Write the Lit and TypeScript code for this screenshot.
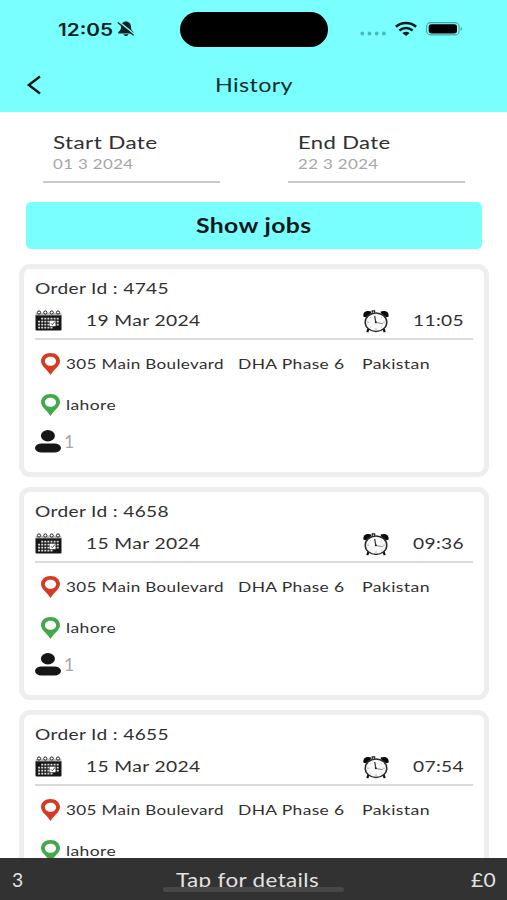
import { LitElement, html, css, svg, nothing } from "lit";
import { customElement, property } from "lit/decorators.js";

/* A line of text drawn to a fixed advance width, on a baseline inside its own line box. */
const line = (text: string, width: number, size: number, height: number, base: number, cls = "") => html`
  <svg class="line ${cls}" width=${width} height=${height} font-size=${size}>
    ${svg`<text x="0" y=${base} textLength=${width} lengthAdjust="spacingAndGlyphs">${text}</text>`}
  </svg>`;

const lineStyles = css`
  svg { display: block; flex: none; overflow: visible; }
  .line { font-family: Lato, "Open Sans", sans-serif; letter-spacing: 0.3px; fill: #303030; }
  .soft { fill: #a6a6a6; }
  .strong { font-weight: 700; fill: #051818; }
  .head { fill: #0c2e2e; }
  .pale { fill: #e2e2e2; }
`;

const calendarIcon = html`<svg width="27" height="21" viewBox="0 0 27 21">
  <path d="M0.5 5h26v14.5a1 1 0 0 1-1 1h-24a1 1 0 0 1-1-1z" fill="#161616"/>
  <path d="M0.7 2.8h25.6v2.6H0.7z" fill="#bbb"/>
  <g fill="#fff" stroke="#222" stroke-width="1"><circle cx="4" cy="2.5" r="1.6"/><circle cx="10.3" cy="2.5" r="1.6"/><circle cx="16.7" cy="2.5" r="1.6"/><circle cx="23" cy="2.5" r="1.6"/></g>
  <g stroke="#d8d8d8" stroke-width="1.8" stroke-dasharray="2 1.1" fill="none">
    <path d="M6.2 8.6h18.4M3.1 11.6h21.5M3.1 14.6h21.5M3.1 17.6h15.3"/></g>
  <path d="M14.6 10.8h5.8v5.4h-5.8z" fill="#fff"/><path d="M16 13.4l1.300 1.300 2.800-3.300" fill="none" stroke="#333" stroke-width="0.9"/>
</svg>`;

const clockIcon = html`<svg width="26" height="23" viewBox="0 0 26 23">
  <path d="M5.500 18.500l-1.200 3.600M20.500 18.500l1.200 3.600" stroke="#111" stroke-width="2.200"/>
  <path d="M0.500 6.800C-.4 2 2.800-.2 8.400 1.400L8 3.200 2.800 7.300zM25.500 6.800c.9-4.800-2.300-7-7.900-5.400l.4 1.800 5.200 4.100z" fill="#080808"/>
  <path d="M9.300 2.800V.9h2.300v1.800" fill="none" stroke="#222" stroke-width="1.300"/>
  <ellipse cx="13" cy="12.200" rx="10.800" ry="9.300" fill="#fafafa" stroke="#2a2a2a" stroke-width="1.500"/>
  <path d="M13 18.200V20M4 12.200h2.200M19.800 12.200h2.200M7.300 7.400l.8.7M18.700 7.400l-.8.7M7.300 17.200l.8-.7M18.700 17.200l-.8-.7" stroke="#999" stroke-width="0.8"/>
  <path d="M11.700 5.800l1.100 6.700" fill="none" stroke="#333" stroke-width="1.200"/><path d="M12.800 12.500l7 1.200" stroke="#777" stroke-width="0.9"/><circle cx="12.800" cy="12.300" r="1" fill="#222"/>
</svg>`;

const pinIcon = (fill: string) => html`<svg width="19" height="22" viewBox="0 0 19 22">
  <path fill-rule="evenodd" fill=${fill} d="M9.500 0C4.100 0 0 3.500 0 8.100c0 4.900 5.300 7.600 9.500 13.900C13.700 15.700 19 13 19 8.100 19 3.500 14.900 0 9.500 0zM9.500 3.700c3.200 0 5.600 1.900 5.600 4.500s-2.400 4.500-5.600 4.500S3.900 10.800 3.900 8.200s2.400-4.500 5.600-4.500z"/>
</svg>`;

const personIcon = html`<svg width="26" height="23" viewBox="0 0 26 23" fill="#161616">
  <ellipse cx="12.900" cy="5.800" rx="7" ry="5.700"/><rect y="13.500" width="26" height="9" rx="6.500" ry="4.500"/>
</svg>`;

@customElement("status-bar")
class StatusBar extends LitElement {
  static styles = [lineStyles, css`
    :host { display: flex; height: 59px; box-sizing: border-box; padding: 12px 44px 0 58px; }
    .clock { font-family: Inter, sans-serif; font-weight: 600; fill: #082020; letter-spacing: 0; }
    .bell { margin: 9px 0 0 4px; }
    .island { width: 148px; height: 35px; border-radius: 18px; background: #000; margin-left: 45px; flex: none; }
    .dots { margin: 19px 0 0 32px; }
    .wifi { margin: 10px 0 0 8px; }
    .battery { margin: 10px 0 0 9px; }
  `];
  render() {
    return html`
      ${line("12:05", 55, 17, 35, 23.5, "clock")}
      <svg class="bell" width="18" height="16" viewBox="0 0 18 16">
        <path d="M9 0.500C6 .500 4 3 4 5.600c0 3-.900 4.400-2.600 5.500-.500.400-.300 1.500.400 1.500h14.400c.700 0 .900-1.100.400-1.500-1.700-1.100-2.600-2.500-2.600-5.500C14 3 12 .500 9 .500zM6.500 13.300h5c-.300 1.100-1.200 1.800-2.500 1.800s-2.200-.7-2.500-1.800z" fill="#0a2222"/>
        <path d="M1.500 0.300L17.400 13.200" stroke="#7ff" stroke-width="1.500"/>
        <path d="M.800 1.400L16.600 14.300" stroke="#0a2222" stroke-width="1.300"/>
      </svg>
      <div class="island"></div>
      <svg class="dots" width="27" height="5" viewBox="0 0 27 5" fill="#50b5b5">
        <circle cx="2.300" cy="2.500" r="1.900"/><circle cx="9.500" cy="2.500" r="1.900"/><circle cx="16.700" cy="2.500" r="1.900"/><circle cx="23.900" cy="2.500" r="1.900"/>
      </svg>
      <svg class="wifi" width="22" height="14" viewBox="0 0 22 14">
        <g fill="none" stroke="#051c1c" stroke-width="2.600"><path d="M.900 4.800C6.700-.200 15.300-.200 21.100 4.800"/><path d="M4.400 8.400c3.900-3.200 9.300-3.200 13.200 0"/></g>
        <path d="M7.400 10.900c2.100-1.600 5.100-1.600 7.200 0L11 13.900z" fill="#051c1c"/>
      </svg>
      <svg class="battery" width="37" height="14" viewBox="0 0 37 14">
        <rect x=".6" y=".6" width="32.500" height="12.300" rx="4" fill="none" stroke="#4aa3a3" stroke-width="1.100"/>
        <rect x="2.700" y="2.200" width="28.300" height="9.200" rx="2.600"/><path d="M34.600 4.800c1.900.700 1.900 3.300 0 4z" fill="#4aa3a3"/>
      </svg>`;
  }
}

@customElement("date-field")
class DateField extends LitElement {
  @property() label = "";
  @property() value = "";
  @property({ type: Number }) span = 100;
  static styles = [lineStyles, css`
    :host { display: block; width: 177px; height: 71px; box-sizing: border-box; padding: 19px 0 0 10px; border-bottom: 2px solid #c9c9c9; flex: none; }
  `];
  render() {
    return html`${line(this.label, this.span, 18, 24, 18)}${line(this.value, 80.5, 14, 20, 14, "soft")}`;
  }
}

@customElement("job-card")
class JobCard extends LitElement {
  @property() order = "";
  @property() date = "";
  @property() time = "";
  @property() riders = "";
  static styles = [lineStyles, css`
    :host { display: block; height: 213px; box-sizing: border-box; flex: none; border: 5.500px solid #eeeeee; border-radius: 11px; padding: 9px 11px 0; background: #fff; }
    .when { display: flex; height: 27px; margin-top: 7px; box-sizing: border-box; padding-top: 3px; }
    .day { margin: 0 auto 0 24px; }
    .hour { margin: 0 9.500px 0 24px; }
    hr { height: 2px; margin: 4px 0 0; border: 0; background: #dadada; }
    .place { display: flex; height: 22px; margin: 13px 0 0 5.500px; gap: 6px; }
    .place + .place { margin-top: 19px; }
    .parts { display: flex; }
    .area { margin-left: 14px; }
    .country { margin-left: 18px; }
    .riders { display: flex; gap: 3px; margin-top: 14px; }
  `];
  render() {
    return html`
      ${line("Order Id : " + this.order, 134, 16.200, 22, 15.500)}
      <div class="when">${calendarIcon}<div class="day">${line(this.date, 114.500, 16.200, 22, 16)}</div>
        ${clockIcon}<div class="hour">${line(this.time, 51, 16.200, 22, 16)}</div></div>
      <hr />
      <div class="place">${pinIcon("#d63a20")}<div class="parts">${line("305 Main Boulevard", 158, 14.200, 22, 15.500)}
        <div class="area">${line("DHA Phase 6", 106.500, 14.200, 22, 15.500)}</div>
        <div class="country">${line("Pakistan", 68, 14.200, 22, 15.500)}</div></div></div>
      <div class="place">${pinIcon("#43a849")}${line("lahore", 50, 14.200, 22, 16)}</div>
      ${this.riders ? html`<div class="riders">${personIcon}${line(this.riders, 10.500, 17, 23, 17.500, "soft")}</div>` : nothing}`;
  }
}

@customElement("app-root")
class AppRoot extends LitElement {
  static styles = [lineStyles, css`
    :host { display: flex; flex-direction: column; width: 507px; height: 900px; overflow: hidden; background: #fff; }
    header { height: 112px; background: #7affff; flex: none; }
    nav { display: flex; height: 53px; padding-left: 27px; }
    .back { margin-top: 16px; }
    .title { margin-left: 174px; }
    .dates { display: flex; gap: 67.500px; padding-left: 43px; flex: none; }
    button { display: flex; justify-content: center; width: 456px; height: 47px; margin: 19px 0 0 26px; padding: 0; border: 0; border-radius: 5px; background: #7affff; flex: none; }
    main { display: flex; flex-direction: column; flex: 1; min-height: 0; overflow: hidden; gap: 10px; padding: 14.500px 18px 0 19px; }
    footer { display: flex; justify-content: space-between; position: relative; flex: none; height: 42px; box-sizing: border-box; padding: 0 11px 0 12px; background: #323232; }
    .home { position: absolute; left: 163px; top: 29px; width: 181px; height: 5px; border-radius: 3px; background: #484848; }
  `];
  jobs = [
    { order: "4745", date: "19 Mar 2024", time: "11:05", riders: "1" },
    { order: "4658", date: "15 Mar 2024", time: "09:36", riders: "1" },
    { order: "4655", date: "15 Mar 2024", time: "07:54", riders: "" },
  ];
  render() {
    return html`
      <header>
        <status-bar></status-bar>
        <nav>
          <svg class="back" width="14" height="20" viewBox="0 0 14 20"><path d="M13 1.500L1.800 10 13 18.500" fill="none" stroke="#031010" stroke-width="2.300"/></svg>
          <div class="title">${line("History", 78, 19.500, 53, 33, "head")}</div>
        </nav>
      </header>
      <div class="dates">
        <date-field label="Start Date" value="01 3 2024" span="104.5"></date-field>
        <date-field label="End Date" value="22 3 2024" span="92.5"></date-field>
      </div>
      <button>${line("Show jobs", 115.500, 20, 47, 31, "strong")}</button>
      <main>${this.jobs.map((j) => html`<job-card order=${j.order} date=${j.date} time=${j.time} riders=${j.riders}></job-card>`)}</main>
      <footer>
        ${line("3", 11.500, 19, 42, 28.500, "pale")}
        ${line("Tap for details", 143, 19, 42, 28.500, "pale")}
        ${line("£0", 25, 19, 42, 28.500, "pale")}
        <div class="home"></div>
      </footer>`;
  }
}
